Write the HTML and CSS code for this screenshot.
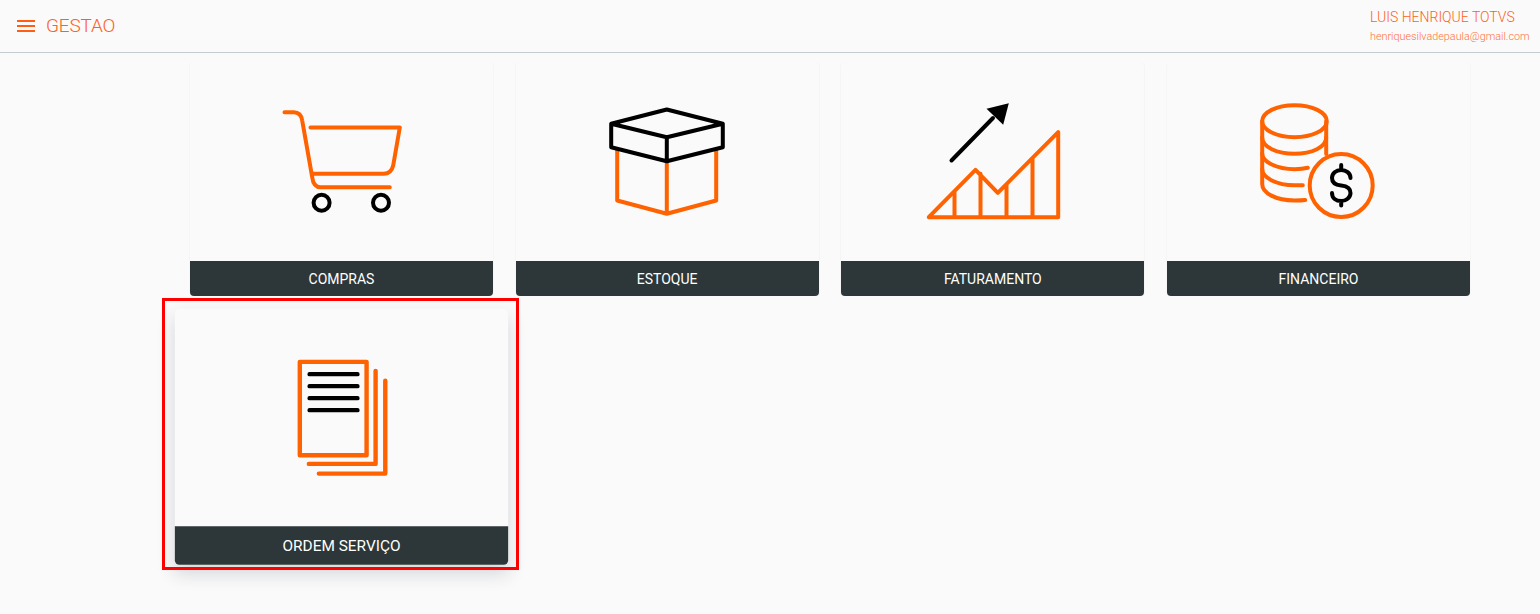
FILE: index.html
```html
<!DOCTYPE html>
<html lang="pt-BR">
<head>
    <meta charset="UTF-8">
    <title>Gestao</title>
    <link rel="stylesheet" href="styles.css">
</head>
<body>
    <header class="topbar">
        <div class="brand">
            <svg class="menu-icon" viewBox="0 0 18 12" width="18" height="12">
                <path d="M0 1H18M0 6H18M0 11H18"/>
            </svg>
            <span class="brand-name">GESTAO</span>
        </div>
        <div class="user">
            <div class="user-name">LUIS HENRIQUE TOTVS</div>
            <div class="user-email">henriquesilvadepaula@gmail.com</div>
        </div>
    </header>

    <main class="modules">
        <div class="slot">
            <div class="card">
                <div class="card-image">
                    <svg class="icon" viewBox="-10 -5 140 130">
                        <path class="or" d="M2.5 9.2H11.8C16.5 9.2 19.5 12.5 20.2 17.5L30.2 74.2C31 80.5 33.5 84.2 38.5 84.2H107.8"/>
                        <path class="or" d="M28.5 24.5H117.8L111.2 62.5C110 67.5 106.5 70.8 101.8 70.8H31.2"/>
                        <circle class="bk" cx="39.6" cy="99.8" r="8"/>
                        <circle class="bk" cx="99" cy="99.8" r="8"/>
                    </svg>
                </div>
                <div class="card-title">COMPRAS</div>
            </div>
        </div>
        <div class="slot">
            <div class="card">
                <div class="card-image">
                    <svg class="icon" viewBox="-10 -5 140 130">
                        <path class="or" d="M10.2 46.8V97.5L59.8 110.8L109.2 97.5V46.8M59.8 58.2V110.8"/>
                        <path class="bk" d="M59.8 6.5L115.8 20.8V44.2L59.8 58.2L4.2 44.2V20.8ZM4.2 20.8L59.8 34.2L115.8 20.8M59.8 34.2V58.2"/>
                    </svg>
                </div>
                <div class="card-title">ESTOQUE</div>
            </div>
        </div>
        <div class="slot">
            <div class="card">
                <div class="card-image">
                    <svg class="icon" viewBox="-10 -5 140 130">
                        <path class="bk" d="M18.5 57.5L60 15"/>
                        <path class="fill-bk" d="M75.8 0.2L53.5 5.8L70.2 21.8Z"/>
                        <path class="or" d="M-4.2 114.2L42.5 66.8L64.8 89.8L125.2 29.2V114.2ZM21.5 89.2V114.2M47.5 70.8V114.2M73.5 81.8V114.2M99.5 55.8V114.2"/>
                    </svg>
                </div>
                <div class="card-title">FATURAMENTO</div>
            </div>
        </div>
        <div class="slot">
            <div class="card">
                <div class="card-image">
                    <svg class="icon" viewBox="-10 -5 140 130">
                        <ellipse class="or" cx="36.5" cy="18.2" rx="32.3" ry="16"/>
                        <path class="or" d="M4.2 18.2V81C4.2 90 18 97.5 36.5 97.5C40 97.5 44 97.4 47.2 97M68.2 18.2V51"/>
                        <path class="or" d="M4.2 34.5C4.2 44 19 50.8 36.5 50.8C54 50.8 68.2 44 68.2 34.5"/>
                        <path class="or" d="M4.2 50.5C4.2 59 19 66.2 36.5 66.2C41 66.2 46 65.8 49.8 64.8"/>
                        <path class="or" d="M4.2 66C4.2 75 19 82.2 36.5 82.2H44.8"/>
                        <circle class="or" cx="83.2" cy="82.5" r="31.5"/>
                        <path class="bk" d="M92.5 75C92.5 70 88 67 83.2 67C78 67 74 70.5 74 75C74 80 78 82 83.2 82.5C88.5 83 92.5 85.5 92.5 90C92.5 94.5 88 98 83.2 98C78 98 74 95 74 90M83.2 62V67M83.2 98V102.5"/>
                    </svg>
                </div>
                <div class="card-title">FINANCEIRO</div>
            </div>
        </div>
        <div class="slot">
            <div class="card card-hover">
                <div class="card-image">
                    <svg class="icon" viewBox="-10 -5 140 130">
                        <path class="or" d="M21.6 8.6H82.3V93.5H21.6Z"/>
                        <path class="or" d="M29.8 101.4H90.5V16.8M38.9 110.2H99.3V25.7"/>
                        <path class="bk" d="M30.5 19.8H74M30.5 30.7H74M30.5 41.6H74M30.5 52.5H74"/>
                    </svg>
                </div>
                <div class="card-title">ORDEM SERVIÇO</div>
            </div>
            <div class="highlight"></div>
        </div>
    </main>
</body>
</html>
```

FILE: styles.css
```css
html, body {
    margin: 0;
    height: 100%;
}
body {
    background: #fafafa;
    font-family: Roboto, "Liberation Sans", sans-serif;
    overflow: hidden;
}

/* barra superior */
.topbar {
    height: 52px;
    display: flex;
    justify-content: space-between;
    align-items: center;
    padding: 0 10px 0 17px;
    border-bottom: 1px solid #c5ccd0;
}
.brand {
    display: flex;
    align-items: center;
    gap: 11px;
}
.menu-icon path {
    fill: none;
    stroke: #ff5f15;
    stroke-width: 2;
}
.brand-name {
    font-size: 19px;
    font-weight: 300;
    color: #ff5f20;
    letter-spacing: -0.2px;
    padding-bottom: 2px;
}
.user {
    width: 160px;
}
.user-name {
    font-size: 14px;
    font-weight: 300;
    color: #ff5f20;
    white-space: nowrap;
    margin: 0 0 5px;
}
.user-email {
    font-size: 10.8px;
    font-weight: 300;
    color: #ff7040;
    white-space: nowrap;
}

/* cards */
.modules {
    display: grid;
    grid-template-columns: repeat(4, 1fr);
    grid-auto-rows: 232.5px;
    column-gap: 22.67px;
    row-gap: 24px;
    padding: 10px 70px 0 190px;
}
.slot {
    position: relative;
}
.card {
    height: 100%;
    display: flex;
    flex-direction: column;
    background: #fafafa;
    border-radius: 4px;
    box-shadow: -1px 0 0 #f5f5f5, 1px 0 0 #f5f5f5;
}
.card-image {
    flex: 1;
    display: flex;
    justify-content: center;
    align-items: center;
    padding-top: 3px;
}
.icon {
    width: 140px;
    height: 130px;
}
.icon .or,
.icon .bk {
    fill: none;
    stroke-width: 4;
    stroke-linecap: round;
    stroke-linejoin: round;
}
.icon .or {
    stroke: #ff6200;
}
.icon .bk {
    stroke: #000;
}
.icon .fill-bk {
    fill: #000;
}
.card-title {
    height: 34px;
    padding-top: 1px;
    display: flex;
    justify-content: center;
    align-items: center;
    background: #2d3739;
    color: #fff;
    font-size: 14px;
    border-radius: 0 0 4px 4px;
}
.card-hover {
    transform: scale(1.1);
    box-shadow: 0 8px 16px rgba(30, 40, 60, 0.16);
}

/* marca vermelha por cima do card */
.highlight {
    position: absolute;
    top: -22px;
    right: -26px;
    bottom: -18px;
    left: -28px;
    border: 3px solid #f00;
}
```
